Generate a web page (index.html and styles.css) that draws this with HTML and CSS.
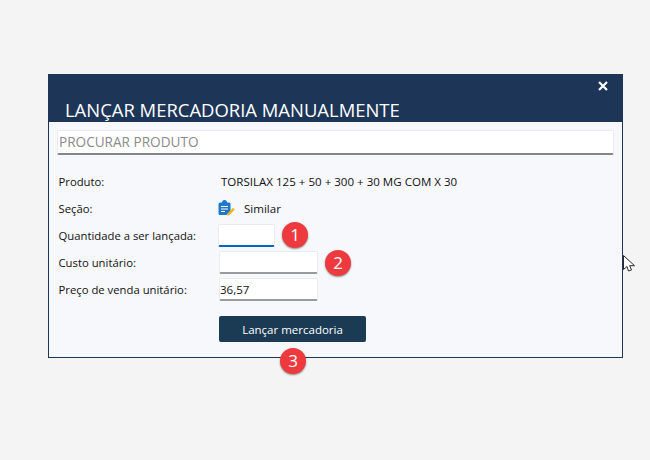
FILE: index.html
```html
<!DOCTYPE html>
<html lang="pt-BR">
<head>
  <meta charset="UTF-8" />
  <title>Lançar mercadoria</title>
  <link rel="stylesheet" href="styles.css">
</head>
<body>

  <div class="dialog">
    <div class="dialog-header">
      <svg class="close" width="10" height="10" viewBox="0 0 10 10">
        <path d="M1 1l8 8M9 1l-8 8" stroke="#fff" stroke-width="2.200" fill="none"/>
      </svg>
      <h1>LANÇAR MERCADORIA MANUALMENTE</h1>
    </div>

    <div class="dialog-body">
      <div class="search">PROCURAR PRODUTO</div>

      <div class="row first">
        <label>Produto:</label>
        <span class="product">TORSILAX 125 + 50 + 300 + 30 MG COM X 30</span>
      </div>
      <div class="row">
        <label>Seção:</label>
        <span class="section">
          <svg class="section-icon" width="17" height="17" viewBox="0 0 17 17">
            <path d="M0.500 4a1.500 1.500 0 0 1 1.500-1.500h2a2.500 2.500 0 0 1 5 0h2a1.500 1.500 0 0 1 1.500 1.500v7l-4 4H2a1.500 1.500 0 0 1-1.500-1.500z" fill="#1f78c8"/>
            <path d="M3 6.500h7M3 9h7M3 11.500h4" stroke="#fff" stroke-width="1.200" fill="none"/>
            <path d="M9 16l.8-2.800 5.200-5.400 1.800 1.800-5.300 5.500z" fill="#f2b418"/>
          </svg>
          Similar
        </span>
      </div>
      <div class="row">
        <label>Quantidade a ser lançada:</label>
        <div class="field short focused"></div>
        <span class="badge badge-one">1</span>
      </div>
      <div class="row">
        <label>Custo unitário:</label>
        <div class="field"></div>
        <span class="badge badge-two">2</span>
      </div>
      <div class="row">
        <label>Preço de venda unitário:</label>
        <div class="field">36,57</div>
      </div>

      <div class="actions">
        <button class="launch">Lançar mercadoria</button>
        <span class="badge badge-three">3</span>
      </div>
    </div>
  </div>

  <!-- ponteiro do mouse -->
  <svg class="pointer" width="14" height="20" viewBox="0 0 14 20">
    <path d="M1.500 1.500v14l3.500-3 1.500 4.500 3-1-1.800-4.300h4.800z" fill="#fff" stroke="#2a2a2a" stroke-width="1"/>
  </svg>

</body>
</html>
```

FILE: styles.css
```css
body {
  margin: 0;
  height: 460px;
  overflow: hidden;
  background: #f4f4f4;
  font-family: "Open Sans", "Noto Sans", sans-serif;
  font-size: 11.55px;
  color: #111;
  position: relative;
}

.dialog {
  position: absolute;
  left: 48px;
  top: 74px;
  width: 573px;
  height: 282px;
  border: 1px solid #1d3557;
  background: #f7f8fb;
}

.dialog-header {
  height: 47px;
  margin-top: -1px;
  padding-top: 1px;
  background: #1d3557;
  color: #fff;
  position: relative;
  display: flex;
  align-items: flex-end;
}

.dialog-header h1 {
  margin: 0 0 0 16px;
  font-size: 18.45px;
  font-weight: 400;
  line-height: 25px;
}

.close {
  position: absolute;
  top: 7px;
  right: 14px;
}

.dialog-body {
  padding: 8px 8px 0;
}

.search {
  box-sizing: border-box;
  height: 25px;
  background: #fff;
  border: 1px solid #ebebeb;
  border-bottom: 2px solid #858585;
  color: #8a8a8a;
  font-size: 13.6px;
  line-height: 22px;
  padding-left: 1px;
  border-radius: 2px;
}

.row {
  display: grid;
  grid-template-columns: 160px auto;
  justify-content: start;
  align-items: center;
  height: 27px;
  padding-left: 2px;
  position: relative;
}

.row label {
  font-size: 11.3px;
  margin-left: -0.5px;
}

.row.first {
  margin-top: 13px;
}

.product {
  padding-left: 2px;
}

.section {
  display: flex;
  align-items: center;
  gap: 9px;
  margin-left: -1px;
}

.field {
  box-sizing: border-box;
  width: 99px;
  height: 23px;
  background: #fff;
  border: 1px solid #ebebeb;
  border-bottom: 2px solid #9a9a9a;
  line-height: 21px;
  padding-left: 0;
  border-radius: 2px;
}

.field.short {
  width: 57px;
  margin-left: -1px;
}

.field.focused {
  border-bottom: 2px solid #0067c0;
}

.actions {
  margin-top: 13px;
  padding-left: 162px;
  position: relative;
}

.launch {
  display: block;
  width: 147px;
  height: 26px;
  border: none;
  border-radius: 2px;
  background: #1b3a54;
  color: #fff;
  font-family: inherit;
  font-size: 11.5px;
}

.badge {
  position: absolute;
  width: 26px;
  height: 26px;
  border-radius: 50%;
  background: #ee3a3f;
  color: #fff;
  font-size: 17px;
  line-height: 26px;
  text-align: center;
  box-shadow: 0 1px 2px rgba(0, 0, 0, 0.45);
}

.badge-one {
  left: 225px;
  top: 0;
}

.badge-two {
  left: 268px;
  top: 1px;
}

.badge-three {
  left: 223px;
  top: 32px;
}

.pointer {
  position: absolute;
  left: 622px;
  top: 254px;
}
```
